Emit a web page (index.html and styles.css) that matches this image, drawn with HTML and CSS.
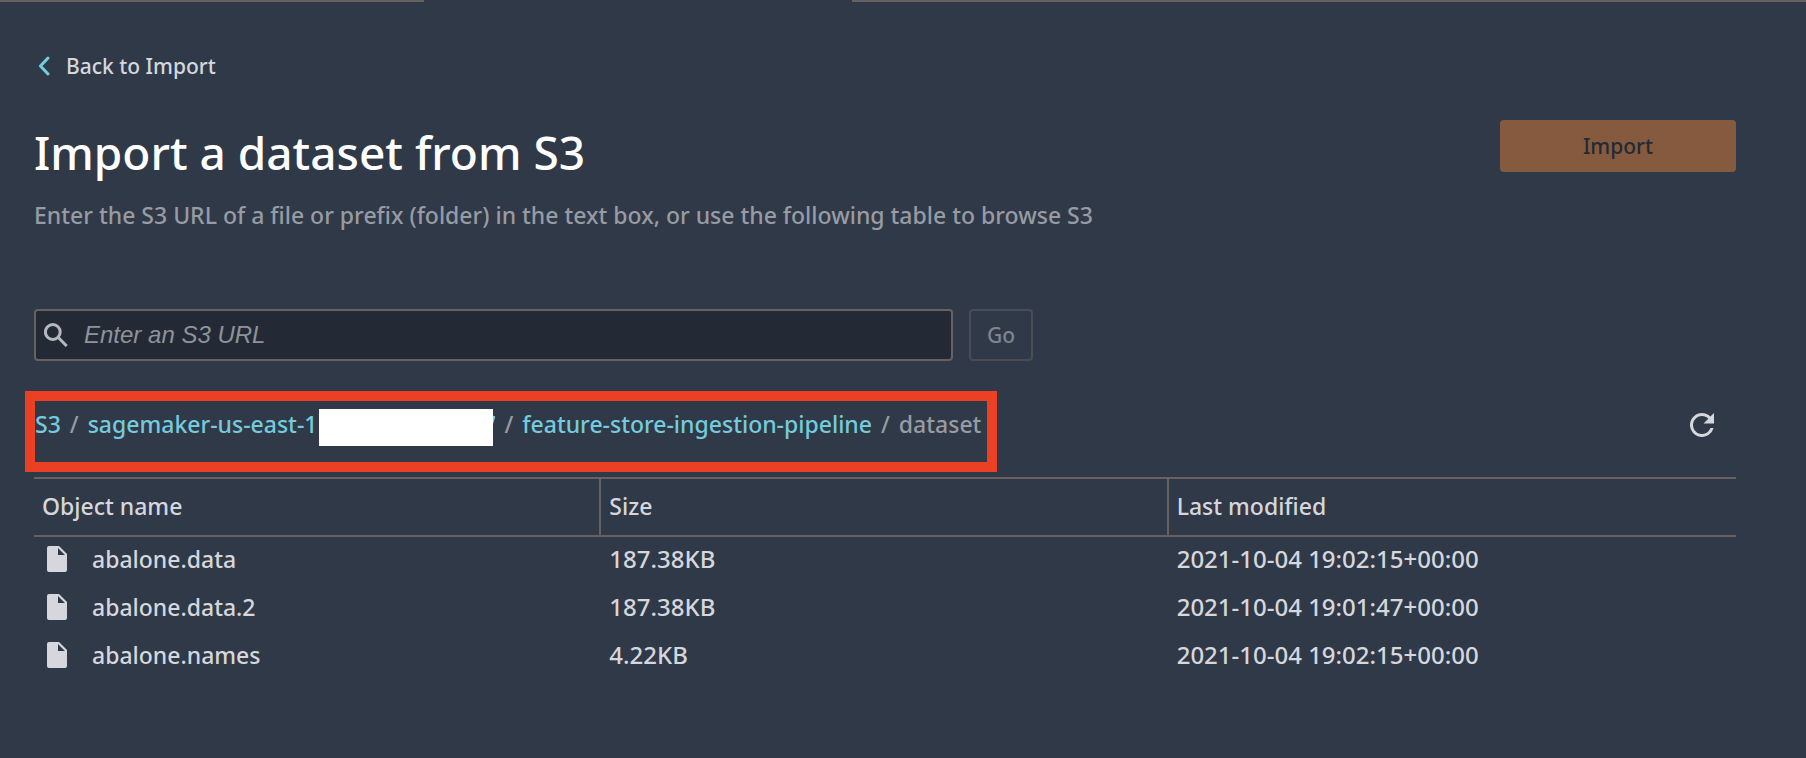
FILE: index.html
```html
<!DOCTYPE html>
<html lang="en">
<head>
<meta charset="utf-8">
<meta name="viewport" content="width=device-width, initial-scale=1">
<title>Import a dataset from S3</title>
<link rel="stylesheet" href="styles.css">
</head>
<body>
<div class="tab-edge"><span class="tab-edge-active"></span></div>
<main class="page">
  <a class="back" href="#">
    <svg class="back-icon" viewBox="0 0 12 22" aria-hidden="true"><path d="M10 3 2.500 11l7.500 8"/></svg>
    <span>Back to Import</span>
  </a>
  <header class="heading">
    <div class="heading-text">
      <h1 class="title">Import a dataset from S3</h1>
      <p class="description">Enter the S3 URL of a file or prefix (folder) in the text box, or use the following table to browse S3</p>
    </div>
    <button class="import-button" type="button" disabled>Import</button>
  </header>
  <form class="url-form">
    <label class="url-field">
      <svg class="search-icon" viewBox="0 0 24 24" aria-hidden="true"><circle cx="8.800" cy="9" r="7.400"/><path d="m14.300 14.500 8.400 8.500"/></svg>
      <input class="url-input" type="text" placeholder="Enter an S3 URL" aria-label="S3 URL">
    </label>
    <button class="go-button" type="submit" disabled>Go</button>
  </form>
  <div class="location">
    <nav class="crumbs" aria-label="Breadcrumb">
      <a class="crumb" href="#">S3</a>
      <span class="slash">/</span>
      <a class="crumb crumb-bucket" href="#">sagemaker-us-east-1<span class="redacted"></span><svg class="bucket-end" viewBox="0 0 2 8" aria-hidden="true"><path d="M0 0h2v2L0 8z"/></svg></a>
      <span class="slash">/</span>
      <a class="crumb" href="#">feature-store-ingestion-pipeline</a>
      <span class="slash">/</span>
      <span class="current">dataset</span>
    </nav>
    <button class="refresh" type="button" aria-label="Refresh">
      <svg class="refresh-icon" viewBox="4 4 16 16" aria-hidden="true"><path d="M17.650 6.350A7.958 7.958 0 0 0 12 4a8 8 0 1 0 7.730 10h-2.080A6 6 0 1 1 12 6c1.660 0 3.140.690 4.220 1.780L13 11h7V4l-2.350 2.350z"/></svg>
    </button>
  </div>
  <table class="objects">
    <thead>
      <tr><th scope="col">Object name</th><th scope="col">Size</th><th scope="col">Last modified</th></tr>
    </thead>
    <tbody>
      <tr>
        <td><span class="file"><svg class="file-icon" viewBox="0 0 20 26" aria-hidden="true"><path fill-rule="evenodd" d="M2 0h10l8 8v16a2 2 0 0 1-2 2H2a2 2 0 0 1-2-2V2a2 2 0 0 1 2-2zm9 2v7h7z"/></svg>abalone.data</span></td>
        <td class="value">187.38KB</td><td class="value">2021-10-04 19:02:15+00:00</td>
      </tr>
      <tr>
        <td><span class="file"><svg class="file-icon" viewBox="0 0 20 26" aria-hidden="true"><path fill-rule="evenodd" d="M2 0h10l8 8v16a2 2 0 0 1-2 2H2a2 2 0 0 1-2-2V2a2 2 0 0 1 2-2zm9 2v7h7z"/></svg>abalone.data.2</span></td>
        <td class="value">187.38KB</td><td class="value">2021-10-04 19:01:47+00:00</td>
      </tr>
      <tr>
        <td><span class="file"><svg class="file-icon" viewBox="0 0 20 26" aria-hidden="true"><path fill-rule="evenodd" d="M2 0h10l8 8v16a2 2 0 0 1-2 2H2a2 2 0 0 1-2-2V2a2 2 0 0 1 2-2zm9 2v7h7z"/></svg>abalone.names</span></td>
        <td class="value">4.22KB</td><td class="value">2021-10-04 19:02:15+00:00</td>
      </tr>
    </tbody>
  </table>
</main>
</body>
</html>
```

FILE: styles.css
```css
* { box-sizing: border-box; }
body {
  margin: 0;
  background: #303948;
  color: #d5d7dc;
  font: 500 23px/32px "Noto Sans", "Open Sans", sans-serif;
}
button, input { font: inherit; }
.tab-edge {
  display: grid;
  grid-template-columns: 424fr 428fr 954fr;
  height: 2px;
  background: #67625f;
}
.tab-edge-active { grid-column: 2; background: #303948; }
.page { padding: 48px 70px 32px 34px; }
.back {
  display: flex;
  align-items: center;
  gap: 16px;
  padding-left: 4px;
  color: inherit;
  font-size: 21px;
  text-decoration: none;
}
.back-icon { width: 12px; height: 22px; fill: none; stroke: #6fcfe0; stroke-width: 3; stroke-linecap: round; stroke-linejoin: round; }
.heading { display: flex; align-items: flex-start; justify-content: space-between; margin-top: 38px; }
.title { margin: 0; color: #fff; font-size: 46px; font-weight: 500; line-height: 64px; }
.description { margin: 15px 0 0; color: #979ba3; font-size: 23px; }
.import-button {
  width: 236px;
  height: 52px;
  padding: 0;
  border: 0;
  border-radius: 4px;
  background: #865a3e;
  color: #232a35;
  font-size: 21px;
}
.url-form { display: flex; gap: 16px; margin-top: 78px; }
.url-field {
  display: flex;
  align-items: center;
  gap: 16px;
  width: 54%;
  height: 52px;
  padding: 0 8px;
  border: 2px solid #67625f;
  border-radius: 4px;
  background: #232a35;
}
.search-icon { flex: none; width: 24px; height: 24px; fill: none; stroke: #b5b8bd; stroke-width: 3; }
.url-input {
  flex: 1;
  min-width: 0;
  padding: 0;
  border: 0;
  outline: 0;
  background: transparent;
  color: #d5d7dc;
  font: italic 24px/32px "Liberation Sans", Arial, sans-serif;
}
.url-input::placeholder { color: #8f9399; opacity: 1; }
.go-button {
  width: 64px;
  height: 52px;
  padding: 0;
  border: 2px solid #484c54;
  border-radius: 4px;
  background: transparent;
  color: #7f858f;
  font-size: 21px;
}
.location { display: flex; align-items: flex-start; justify-content: space-between; margin-top: 30px; }
.crumbs {
  display: flex;
  gap: 9px;
  height: 81px;
  margin-left: -9px;
  padding: 8px 6px 0 0;
  border: 10px solid #ec4025;
}
.crumb { color: #74cbdd; text-decoration: none; }
.crumb-bucket { display: flex; }
.redacted { width: 174px; height: 37px; margin-left: 2px; background: #fff; }
.bucket-end { width: 2px; height: 8px; margin-top: 7px; fill: #74cbdd; }
.slash, .current { color: #979ba3; }
.crumb, .slash, .current { line-height: 30px; }
.refresh { margin: 22px 22px 0 0; padding: 0; border: 0; background: none; line-height: 0; }
.refresh-icon { width: 24px; height: 24px; fill: #d5d7dc; }
.objects { width: 100%; margin-top: 5px; border-collapse: separate; border-spacing: 0; table-layout: fixed; }
.objects th {
  height: 60px;
  padding: 0 8px 2px;
  border-top: 2px solid #67625f;
  border-bottom: 2px solid #67625f;
  font-weight: 500;
  text-align: left;
}
.objects th:not(:last-child) { border-right: 2px solid #67625f; }
.objects td { height: 48px; padding: 0 8px 4px; }
.objects .value { font-size: 24px; }
.file { display: flex; align-items: center; gap: 25px; padding-left: 5px; }
.file-icon { width: 20px; height: 26px; fill: #d5d7dc; }
```
